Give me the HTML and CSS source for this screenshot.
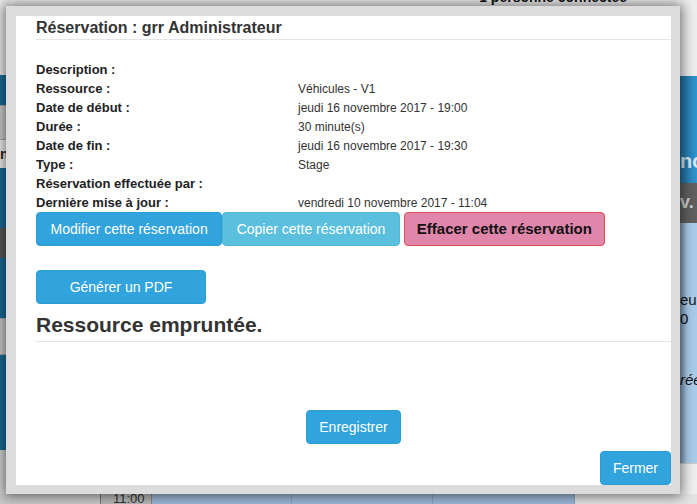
FILE: index.html
```html
<!DOCTYPE html>
<html lang="fr">
<head>
<meta charset="utf-8">
<title>Réservation</title>
<link rel="stylesheet" href="styles.css">
</head>
<body>
<div class="page">
  <div class="left-strip">
    <div class="ls ls-light"></div>
    <div class="ls ls-blue h30"></div>
    <div class="ls ls-grey h35"></div>
    <div class="ls ls-white h28"><span class="ls-text">n.</span></div>
    <div class="ls ls-blue h60"></div>
    <div class="ls ls-dark h30"></div>
    <div class="ls ls-blue h60"></div>
    <div class="ls ls-grey h37"></div>
    <div class="ls ls-blue h95"></div>
    <div class="ls ls-grey2 fill"></div>
  </div>
  <div class="center">
    <div class="top-bar"><span class="online">1 personne connectée</span></div>
  </div>
  <div class="right-strip">
    <div class="rs rs-light"></div>
    <div class="rs rs-blue"><span class="rs-title">ncl</span></div>
    <div class="rs rs-dark"><span class="rs-sub">v.</span></div>
    <div class="rs rs-lightblue">
      <span class="rs-t1">eu</span>
      <span class="rs-t2">0</span>
      <span class="rs-t3">rée</span>
    </div>
    <div class="rs rs-bottom"></div>
  </div>
  <div class="bottom-strip">
    <div class="bs bs-grey"></div>
    <div class="bs bs-box"><span>11:00</span></div>
    <div class="bs bs-blue w140"></div>
    <div class="bs bs-blue w141"></div>
    <div class="bs bs-blue w142"></div>
    <div class="bs bs-light"></div>
  </div>
</div>

<div class="modal">
  <div class="dialog">
    <div class="modal-header">
      <h4 class="modal-title">Réservation : grr Administrateur</h4>
    </div>
    <div class="details">
      <div class="label">Description :</div><div class="value"></div>
      <div class="label">Ressource :</div><div class="value">Véhicules - V1</div>
      <div class="label">Date de début :</div><div class="value">jeudi 16 novembre 2017 - 19:00</div>
      <div class="label">Durée :</div><div class="value">30 minute(s)</div>
      <div class="label">Date de fin :</div><div class="value">jeudi 16 novembre 2017 - 19:30</div>
      <div class="label">Type :</div><div class="value">Stage</div>
      <div class="label">Réservation effectuée par :</div><div class="value"></div>
      <div class="label">Dernière mise à jour :</div><div class="value">vendredi 10 novembre 2017 - 11:04</div>
    </div>
    <div class="actions">
      <button class="btn btn-primary btn-edit">Modifier cette réservation</button>
      <button class="btn btn-info">Copier cette réservation</button>
      <button class="btn btn-danger">Effacer cette réservation</button>
    </div>
    <div class="pdf-row">
      <button class="btn btn-primary btn-pdf">Générer un PDF</button>
    </div>
    <h3 class="section-title">Ressource empruntée.</h3>
    <div class="save-row">
      <button class="btn btn-primary">Enregistrer</button>
    </div>
    <div class="close-row">
      <button class="btn btn-primary">Fermer</button>
    </div>
  </div>
</div>
</body>
</html>
```
FILE: styles.css
```css
* { box-sizing: border-box; }
html, body { margin: 0; padding: 0; }
body {
  width: 697px;
  height: 504px;
  overflow: hidden;
  font-family: "Liberation Sans", Arial, sans-serif;
  color: #333;
  background: #f2f2f2;
  position: relative;
}

/* ---------- background page ---------- */
.page {
  display: grid;
  grid-template-columns: 10px 1fr 17px;
  grid-template-rows: 494px 10px;
  height: 504px;
}
.left-strip { display: flex; flex-direction: column; }
.ls { position: relative; overflow: hidden; }
.ls-light { height: 75px; background: #ececec; }
.ls-blue { background: #1c6e99; }
.ls-grey { background: #cfcfcf; border-top: 1px solid #aaa; border-bottom: 1px solid #aaa; }
.ls-white { background: #f2f2f2; }
.ls-dark { background: #595959; }
.ls-grey2 { background: #d6d6d6; }
.ls-text { font-size: 14px; font-weight: bold; color: #222; line-height: 28px; }
.h28 { height: 28px; } .h30 { height: 30px; } .h35 { height: 35px; }
.h37 { height: 37px; } .h60 { height: 60px; } .h95 { height: 95px; }
.fill { flex: 1; }

.center { background: #f4f4f4; }
.top-bar {
  display: flex;
  justify-content: flex-end;
  padding-right: 53px;
  margin-top: -11px;
}
.online { font-size: 14px; font-weight: bold; color: #111; line-height: 16px; }

.right-strip { display: flex; flex-direction: column; }
.rs { overflow: hidden; white-space: nowrap; }
.rs-light { height: 76px; background: #eeeeee; }
.rs-blue {
  height: 107px;
  background: linear-gradient(90deg, #23719f, #2f97d1);
  padding-top: 70px;
}
.rs-title { font-size: 20px; font-weight: bold; color: #d8e8f4; line-height: 30px; }
.rs-dark { height: 40px; background: #606060; padding-top: 8px; }
.rs-sub { font-size: 18px; font-weight: bold; color: #cfcfcf; line-height: 22px; }
.rs-lightblue {
  height: 240px;
  background: linear-gradient(90deg, #7f9cb8, #aacdec 40%);
  display: flex;
  flex-direction: column;
  padding-top: 68px;
  font-size: 15px;
  line-height: 18px;
  color: #111;
}
.rs-t2 { margin-top: 1px; }
.rs-t3 { margin-top: 43px; font-style: italic; }
.rs-bottom { flex: 1; background: #f0f0f0; border-top: 1px solid #ccc; }

.bottom-strip { grid-column: 1 / -1; display: flex; }
.bs { height: 10px; }
.bs-grey { width: 100px; background: #cbcbcb; }
.bs-box {
  width: 52px;
  background: #b9b9b9;
  border-left: 1px solid #777;
  border-right: 1px solid #888;
  font-size: 13px;
  line-height: 10px;
  overflow: hidden;
  padding-left: 12px;
  color: #333;
}
.bs-blue { background: #9cb9d8; border-right: 1px solid #8aa4c2; }
.w140 { width: 140px; } .w141 { width: 141px; } .w142 { width: 142px; }
.bs-light { flex: 1; background: #e4e4e4; }

/* ---------- modal ---------- */
.modal {
  position: absolute;
  left: 6px;
  top: 6px;
  width: 674px;
  height: 488px;
  background: #dcdcdc;
  padding: 10px 9px 9px 10px;
  box-shadow: 0 0 12px 2px rgba(0, 0, 0, 0.55);
}
.dialog {
  background: #fff;
  height: 100%;
  display: flex;
  flex-direction: column;
  padding-left: 20px;
}
.modal-header {
  border-bottom: 1px solid #e5e5e5;
  padding: 2.5px 0 2.5px 0;
}
.modal-title {
  margin: 0;
  font-size: 16px;
  line-height: 18px;
  font-weight: bold;
  color: #333;
}

.details {
  margin-top: 19.5px;
  display: grid;
  grid-template-columns: 262px 1fr;
  grid-auto-rows: 19.1px;
  align-items: baseline;
  line-height: 19.1px;
}
.label { font-size: 13px; font-weight: bold; color: #222; }
.value { font-size: 12px; color: #333; }

.btn {
  font-family: "Liberation Sans", Arial, sans-serif;
  font-size: 14px;
  line-height: 20px;
  padding: 6px 12px;
  border: 1px solid transparent;
  border-radius: 4px;
  color: #fff;
  cursor: pointer;
  white-space: nowrap;
}
.btn-primary { background: #31a3dd; border-color: #2a9cd6; }
.btn-edit { padding: 6px 13.5px; }
.btn-info { background: #5bc0de; border-color: #4fb8d8; padding: 6px 13.5px; }
.btn-danger {
  background: #e086aa;
  border-color: #d9534f;
  color: #111;
  font-weight: bold;
  font-size: 15px;
  margin-left: 4px;
}

.actions { display: flex; align-items: flex-start; }
.pdf-row { margin-top: 24px; display: flex; }
.btn-pdf { width: 170px; text-align: center; }

.section-title {
  margin: 9px 0 0 0;
  font-size: 21px;
  line-height: 24px;
  font-weight: bold;
  color: #333;
  padding-bottom: 4px;
  border-bottom: 1px solid #e5e5e5;
}
.save-row { margin-top: 68px; display: flex; justify-content: center; }
.close-row { margin-top: auto; display: flex; justify-content: flex-end; }
```
